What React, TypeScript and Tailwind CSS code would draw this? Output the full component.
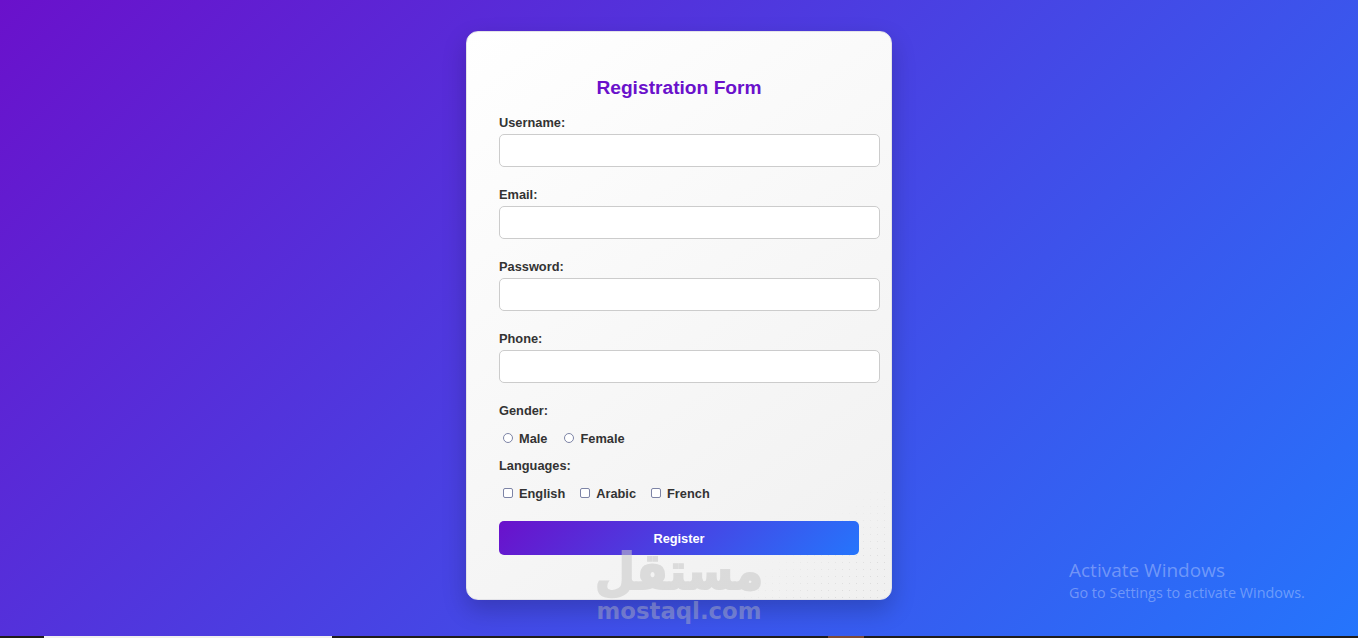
const textFields = ['Username:', 'Email:', 'Password:', 'Phone:'];
const genders = ['Male', 'Female'];
const languages = ['English', 'Arabic', 'French'];

export default function App() {
  return (
    <div className="relative flex h-screen flex-col overflow-hidden font-['Liberation_Sans',Arial,sans-serif]">
      {/* Page */}
      <div className="flex flex-1 justify-center bg-[linear-gradient(135deg,#6a11cb,#2575fc)] pt-[31px]">
        <form className="relative h-[569px] w-[426px] rounded-[12px] border border-[#e3e3e8] bg-[linear-gradient(145deg,#ffffff,#f0f0f0)] px-[32px] pt-[44px] shadow-[0_10px_25px_rgba(0,0,0,0.2)]">
          {/* Dotted corner of the watermark */}
          <div className="pointer-events-none absolute right-0 bottom-0 h-[110px] w-[150px] rounded-br-[12px] bg-[radial-gradient(circle,rgba(120,120,120,0.16)_0.7px,transparent_1px)] bg-[length:7px_7px] [mask-image:linear-gradient(to_top_left,black_20%,transparent_60%)]" />

          <h2 className="h-[23px] w-[360px] text-center text-[19.2px] leading-[23px] font-bold text-[#6a11cb]">Registration Form</h2>

          <div className="mt-[15px]">
            {textFields.map((label) => (
              <div key={label} className="mb-[19px] h-[53px]">
                <label className="block h-[20px] text-[12.8px] leading-[18px] font-bold text-[#333]">{label}</label>
                <input type="text" className="block h-[33px] w-[381px] rounded-[5px] border border-[#ccc] bg-white" />
              </div>
            ))}
          </div>

          <div className="h-[16px] text-[12.8px] leading-[18px] font-bold text-[#333]">Gender:</div>
          <div className="mt-[12px] flex h-[16px] items-center pl-[4px] text-[12.8px] font-bold text-[#333]">
            {genders.map((g) => (
              <label key={g} className="mr-[17px] flex items-center">
                <input type="radio" name="gender" className="mr-[6px] h-[10px] w-[10px] appearance-none rounded-full border border-[#7d84a6] bg-white" />
                <span className="pt-[2px]">{g}</span>
              </label>
            ))}
          </div>

          <div className="mt-[11px] h-[16px] text-[12.8px] leading-[18px] font-bold text-[#333]">Languages:</div>
          <div className="mt-[12px] flex h-[16px] items-center pl-[4px] text-[12.8px] font-bold text-[#333]">
            {languages.map((l) => (
              <label key={l} className="mr-[15px] flex items-center">
                <input type="checkbox" className="mr-[6px] mb-[1px] h-[10px] w-[10px] appearance-none rounded-[2px] border border-[#7d84a6] bg-white" />
                <span className="pt-[2px]">{l}</span>
              </label>
            ))}
          </div>

          <button type="button" className="relative mt-[20px] h-[34px] w-[360px] rounded-[5px] bg-[linear-gradient(135deg,#6a11cb,#2575fc)] pt-[2px] text-[12.8px] font-bold text-white">
            Register
          </button>
        </form>
      </div>

      {/* Taskbar edge */}
      <div className="flex h-[2px] shrink-0 bg-[#1f1c1b]">
        <div className="ml-[44px] w-[288px] bg-[#f0f0f0]" />
        <div className="ml-[496px] w-[36px] bg-[#7c4a36]" />
      </div>

      {/* Watermark */}
      <div className="pointer-events-none absolute top-[545px] left-[596px] flex w-[166px] flex-col items-center">
        <div dir="rtl" className="h-[58px] origin-bottom scale-y-[1.1] font-['DejaVu_Sans',sans-serif] text-[46px] leading-[58px] font-bold text-[#c8c8c8] opacity-55 [-webkit-text-stroke:2px_#c8c8c8]">مستقل</div>
        <div className="-mt-[5px] font-['DejaVu_Sans',sans-serif] text-[22.8px] leading-[26px] font-bold text-[rgba(190,190,190,0.42)]">mostaql.com</div>
      </div>

      {/* Activation notice */}
      <div className="pointer-events-none absolute top-[557px] left-[1069px] font-['Open_Sans',sans-serif] text-[rgba(255,255,255,0.32)]">
        <div className="text-[19px] leading-[26px]">Activate Windows</div>
        <div className="text-[14.4px] leading-[20px]">Go to Settings to activate Windows.</div>
      </div>
    </div>
  );
}
